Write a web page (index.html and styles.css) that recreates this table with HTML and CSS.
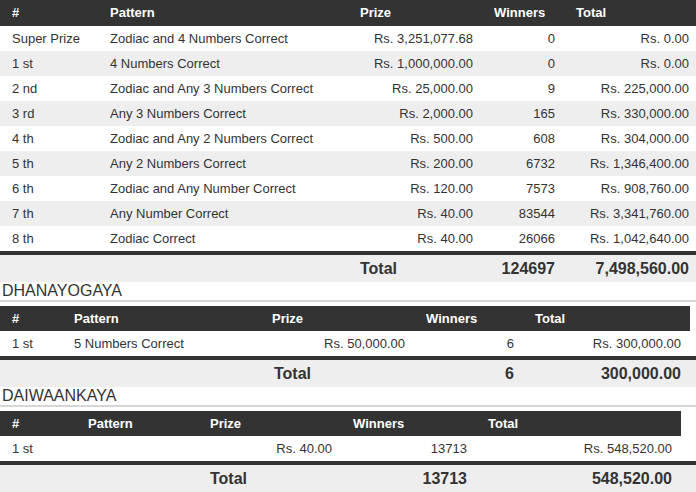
FILE: index.html
```html
<!DOCTYPE html>
<html lang="en">
<head>
<meta charset="utf-8">
<title>Results</title>
<link rel="stylesheet" href="styles.css">
</head>
<body>
<div class="results">
  <div class="tbl t1">
    <div class="row head"><span>#</span><span>Pattern</span><span>Prize</span><span>Winners</span><span>Total</span></div>
    <div class="row"><span>Super Prize</span><span>Zodiac and 4 Numbers Correct</span><span class="num">Rs. 3,251,077.68</span><span class="num">0</span><span class="num">Rs. 0.00</span></div>
    <div class="row alt"><span>1 st</span><span>4 Numbers Correct</span><span class="num">Rs. 1,000,000.00</span><span class="num">0</span><span class="num">Rs. 0.00</span></div>
    <div class="row"><span>2 nd</span><span>Zodiac and Any 3 Numbers Correct</span><span class="num">Rs. 25,000.00</span><span class="num">9</span><span class="num">Rs. 225,000.00</span></div>
    <div class="row alt"><span>3 rd</span><span>Any 3 Numbers Correct</span><span class="num">Rs. 2,000.00</span><span class="num">165</span><span class="num">Rs. 330,000.00</span></div>
    <div class="row"><span>4 th</span><span>Zodiac and Any 2 Numbers Correct</span><span class="num">Rs. 500.00</span><span class="num">608</span><span class="num">Rs. 304,000.00</span></div>
    <div class="row alt"><span>5 th</span><span>Any 2 Numbers Correct</span><span class="num">Rs. 200.00</span><span class="num">6732</span><span class="num">Rs. 1,346,400.00</span></div>
    <div class="row"><span>6 th</span><span>Zodiac and Any Number Correct</span><span class="num">Rs. 120.00</span><span class="num">7573</span><span class="num">Rs. 908,760.00</span></div>
    <div class="row alt"><span>7 th</span><span>Any Number Correct</span><span class="num">Rs. 40.00</span><span class="num">83544</span><span class="num">Rs. 3,341,760.00</span></div>
    <div class="row"><span>8 th</span><span>Zodiac Correct</span><span class="num">Rs. 40.00</span><span class="num">26066</span><span class="num">Rs. 1,042,640.00</span></div>
    <div class="row total"><span></span><span></span><span>Total</span><span class="num">124697</span><span class="num">7,498,560.00</span></div>
  </div>

  <h2 class="section-title">DHANAYOGAYA</h2>
  <div class="tbl t2">
    <div class="row head"><span>#</span><span>Pattern</span><span>Prize</span><span>Winners</span><span>Total</span></div>
    <div class="row"><span>1 st</span><span>5 Numbers Correct</span><span class="num">Rs. 50,000.00</span><span class="num">6</span><span class="num">Rs. 300,000.00</span></div>
    <div class="row total"><span></span><span></span><span>Total</span><span class="num">6</span><span class="num">300,000.00</span></div>
  </div>

  <h2 class="section-title">DAIWAANKAYA</h2>
  <div class="tbl t3">
    <div class="row head"><span>#</span><span>Pattern</span><span>Prize</span><span>Winners</span><span>Total</span></div>
    <div class="row"><span>1 st</span><span></span><span class="num">Rs. 40.00</span><span class="num">13713</span><span class="num">Rs. 548,520.00</span></div>
    <div class="row total"><span></span><span></span><span>Total</span><span class="num">13713</span><span class="num">548,520.00</span></div>
  </div>
</div>
</body>
</html>
```

FILE: styles.css
```css
html, body {
  margin: 0;
  padding: 0;
  background: #fff;
}

body {
  font-family: "Liberation Sans", Arial, sans-serif;
  font-size: 13px;
  color: #333;
}

.results {
  width: 696px;
}

.row {
  display: grid;
  line-height: 25px;
  white-space: nowrap;
}

.row > span {
  padding-left: 12px;
}

.row > span.num {
  padding-left: 0;
  padding-right: 9px;
  text-align: right;
}

.row.alt {
  background: #eeeeee;
}

.row.head {
  width: max-content;
  background: #333333;
  color: #ffffff;
  font-weight: bold;
  line-height: 25px;
}

.t1 .row.head {
  line-height: 26px;
}

.row.total {
  border-top: 4px solid #333333;
  background: #eeeeee;
  font-weight: bold;
  font-size: 16px;
  line-height: 27px;
}

.t1 .row {
  grid-template-columns: 98px 250px 134px 82px 132px;
}

.t1 .row > span.num:last-child {
  padding-right: 7px;
}

.t2 .row {
  grid-template-columns: 62px 198px 154px 109px 167px;
}

.t2 .row.total > span:nth-child(3) {
  padding-left: 14px;
}

.t3 .row {
  grid-template-columns: 76px 122px 143px 135px 205px;
}

.section-title {
  margin: 0 0 4px;
  padding-left: 2px;
  font-size: 16px;
  font-weight: normal;
  line-height: 18px;
  border-bottom: 2px solid #d6d6d6;
  color: #333;
}
```
